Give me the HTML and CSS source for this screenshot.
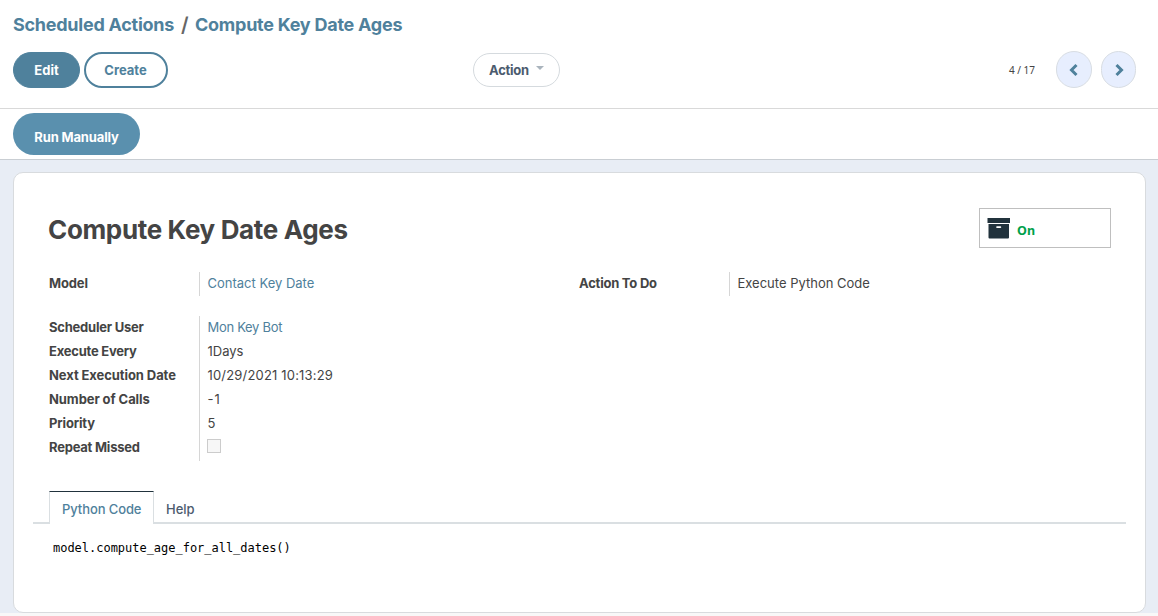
FILE: index.html
```html
<!DOCTYPE html>
<html lang="en">
<head>
<meta charset="utf-8">
<title>Compute Key Date Ages</title>
<link rel="stylesheet" href="styles.css">
</head>
<body>
<header class="panel">
  <nav class="crumbs"><a class="crumb-a">Scheduled Actions</a><span class="slash">/</span><a class="crumb-b">Compute Key Date Ages</a></nav>
  <div class="toolbar">
    <button class="btn primary">Edit</button>
    <button class="btn outline">Create</button>
    <button class="action">Action<i class="caret"></i></button>
    <span class="count">4 / 17</span>
    <button class="pager"><svg width="12" height="14" viewBox="0 0 12 14"><path d="M8.500 2 3.500 7l5 5"/></svg></button>
    <button class="pager next"><svg width="12" height="14" viewBox="0 0 12 14"><path d="M3.500 2l5 5-5 5"/></svg></button>
  </div>
</header>
<div class="status"><button class="run">Run Manually</button></div>
<main class="content">
  <section class="sheet">
    <div class="head">
      <h1>Compute Key Date Ages</h1>
      <div class="stat">
        <svg width="24" height="22" viewBox="0 0 24 22"><path fill="#21323c" d="M.5 1h22.500v5H.500zM1.500 7h20.500v13.500a1 1 0 0 1-1 1h-18.500a1 1 0 0 1-1-1z"/><rect x="9.200" y="9.200" width="5" height="1.800" rx=".8" fill="#fff"/></svg>
        <span>On</span>
      </div>
    </div>
    <div class="groups">
      <div class="group">
        <div class="row"><b>Model</b><span class="link v-contact">Contact Key Date</span></div>
      </div>
      <div class="group">
        <div class="row"><b class="w-todo">Action To Do</b><span class="v-exec">Execute Python Code</span></div>
      </div>
    </div>
    <div class="group details">
      <div class="row"><b class="w-tight">Scheduler User</b><span class="link v-bot">Mon Key Bot</span></div>
      <div class="row"><b class="w-tight">Execute Every</b><span>1Days</span></div>
      <div class="row"><b class="w-next">Next Execution Date</b><span class="v-date">10/29/2021 10:13:29</span></div>
      <div class="row"><b class="w-next">Number of Calls</b><span class="v-neg">-1</span></div>
      <div class="row"><b>Priority</b><span>5</span></div>
      <div class="row"><b class="w-tight">Repeat Missed</b><span><i class="check"></i></span></div>
    </div>
    <div class="tabs"><a class="tab active">Python Code</a><a class="tab">Help</a></div>
    <pre class="code">model.compute_age_for_all_dates()</pre>
  </section>
</main>
</body>
</html>
```
FILE: styles.css
```css
* { box-sizing: border-box; }
body { margin: 0; height: 616px; overflow: hidden; background: #f8f8f8; color: #444; font: 13px/24px Inter, "Open Sans", sans-serif; }
button { font: inherit; padding: 0; margin: 0; }
.panel { height: 109px; background: #fff; border-bottom: 1px solid #d9d9d9; padding: 12px 22px 0 13px; }
.crumbs { height: 26px; line-height: 26px; font-size: 18px; font-weight: 700; color: #4f819c; display: flex; white-space: nowrap; }
.crumb-a { width: 168px; letter-spacing: -0.260px; }
.slash { width: 14px; color: #666; font-size: 20px; font-weight: 600; }
.crumb-b { letter-spacing: -0.250px; }
.toolbar { display: flex; align-items: center; height: 36px; margin-top: 14px; }
.btn { height: 36px; border-radius: 18px; font-weight: 700; line-height: 34px; }
.primary { width: 67px; background: #4f819c; border: 1px solid #4f819c; color: #fff; line-height: 35px; }
.outline { width: 84px; margin-left: 4px; background: #fff; border: 2px solid #4f819c; color: #4f819c; line-height: 32px; padding-right: 1px; }
.action { width: 87px; height: 34px; margin-left: 305px; border-radius: 17px; border: 1px solid #d5dade; background: #fff; color: #4c5b6e; font-weight: 700; display: flex; align-items: center; padding-left: 15px; letter-spacing: -0.250px; }
.caret { margin: -4px 0 0 7px; border: 4px solid transparent; border-top-color: #aab4bd; border-bottom: 0; }
.count { margin-left: auto; font: 10px/20px "Noto Sans", sans-serif; color: #444; }
.pager { display: flex; align-items: center; justify-content: center; width: 36px; height: 37px; border-radius: 18px; border: 1px solid #d8dde3; background: #e7eefe; margin: -1px 0 0 21px; }
.pager.next { margin-left: 9px; width: 35px; }
.pager path { fill: none; stroke: #4f819c; stroke-width: 3; }
.status { height: 51px; background: #fff; border-bottom: 1px solid #c9ced3; padding: 4px 13px; }
.run { display: block; width: 127px; height: 42px; border-radius: 21px; border: 0; background: #5a90ae; color: #fff; font-weight: 700; padding-top: 5px; letter-spacing: -0.150px; }
.content { height: 453px; background: #e8edf5; padding: 12px 12px 0 13px; }
.sheet { height: 441px; background: #fff; border: 1px solid #d8dbde; border-radius: 10px; padding: 35px 19px 0; }
.head { display: flex; justify-content: space-between; padding: 0 15px 0 16px; height: 64px; }
h1 { margin: 5px 0 0 -1px; font-size: 26px; line-height: 34px; font-weight: 700; letter-spacing: -0.350px; white-space: nowrap; }
.stat { width: 132px; height: 40px; border: 1px solid #bfbfbf; display: flex; padding: 8px 0 0 7px; gap: 6px; }
.stat span { color: #00a04a; font: 700 12.500px/27px "Noto Sans", sans-serif; }
.groups { display: grid; grid-template-columns: 530px 1fr; padding-left: 16px; }
.row { display: grid; grid-template-columns: 150px 1fr; height: 24px; white-space: nowrap; }
.row > span { border-left: 1px solid #d6d6d6; padding-left: 7.500px; line-height: 23px; }
.row b { font-weight: 700; letter-spacing: -0.150px; line-height: 23px; }
.row .w-todo, .row .w-tight { letter-spacing: -0.230px; }
.row .w-next { letter-spacing: -0.080px; }
.v-bot { letter-spacing: -0.300px; }
.v-date { letter-spacing: 0.180px; }
.v-neg { letter-spacing: 1px; }
.link { color: #4f819c; }
.details { margin: 20px 0 0 16px; height: 145px; }
.details .row:last-child { height: 25px; }
.check { display: block; width: 14px; height: 14px; margin: 3px 0 0 -0.500px; border: 1px solid #ccc; background: #f7f7f7; }
.tabs { display: flex; height: 33px; margin-top: 30px; padding-left: 16px; border-bottom: 2px solid #dadfe2; }
.tab { height: 31px; padding: 6px 12px 0; font-weight: 500; color: #4c5b6e; }
.active { width: 105px; height: 33px; padding-top: 5px; background: #fff; border: 1px solid #dadfe2; border-top-color: #21323c; border-bottom: 0; color: #4f819c; white-space: nowrap; letter-spacing: -0.100px; }
.code { margin: 12px 0 0 20px; font: 12px/24px "DejaVu Sans Mono", monospace; letter-spacing: -0.020px; color: #000; }
```
